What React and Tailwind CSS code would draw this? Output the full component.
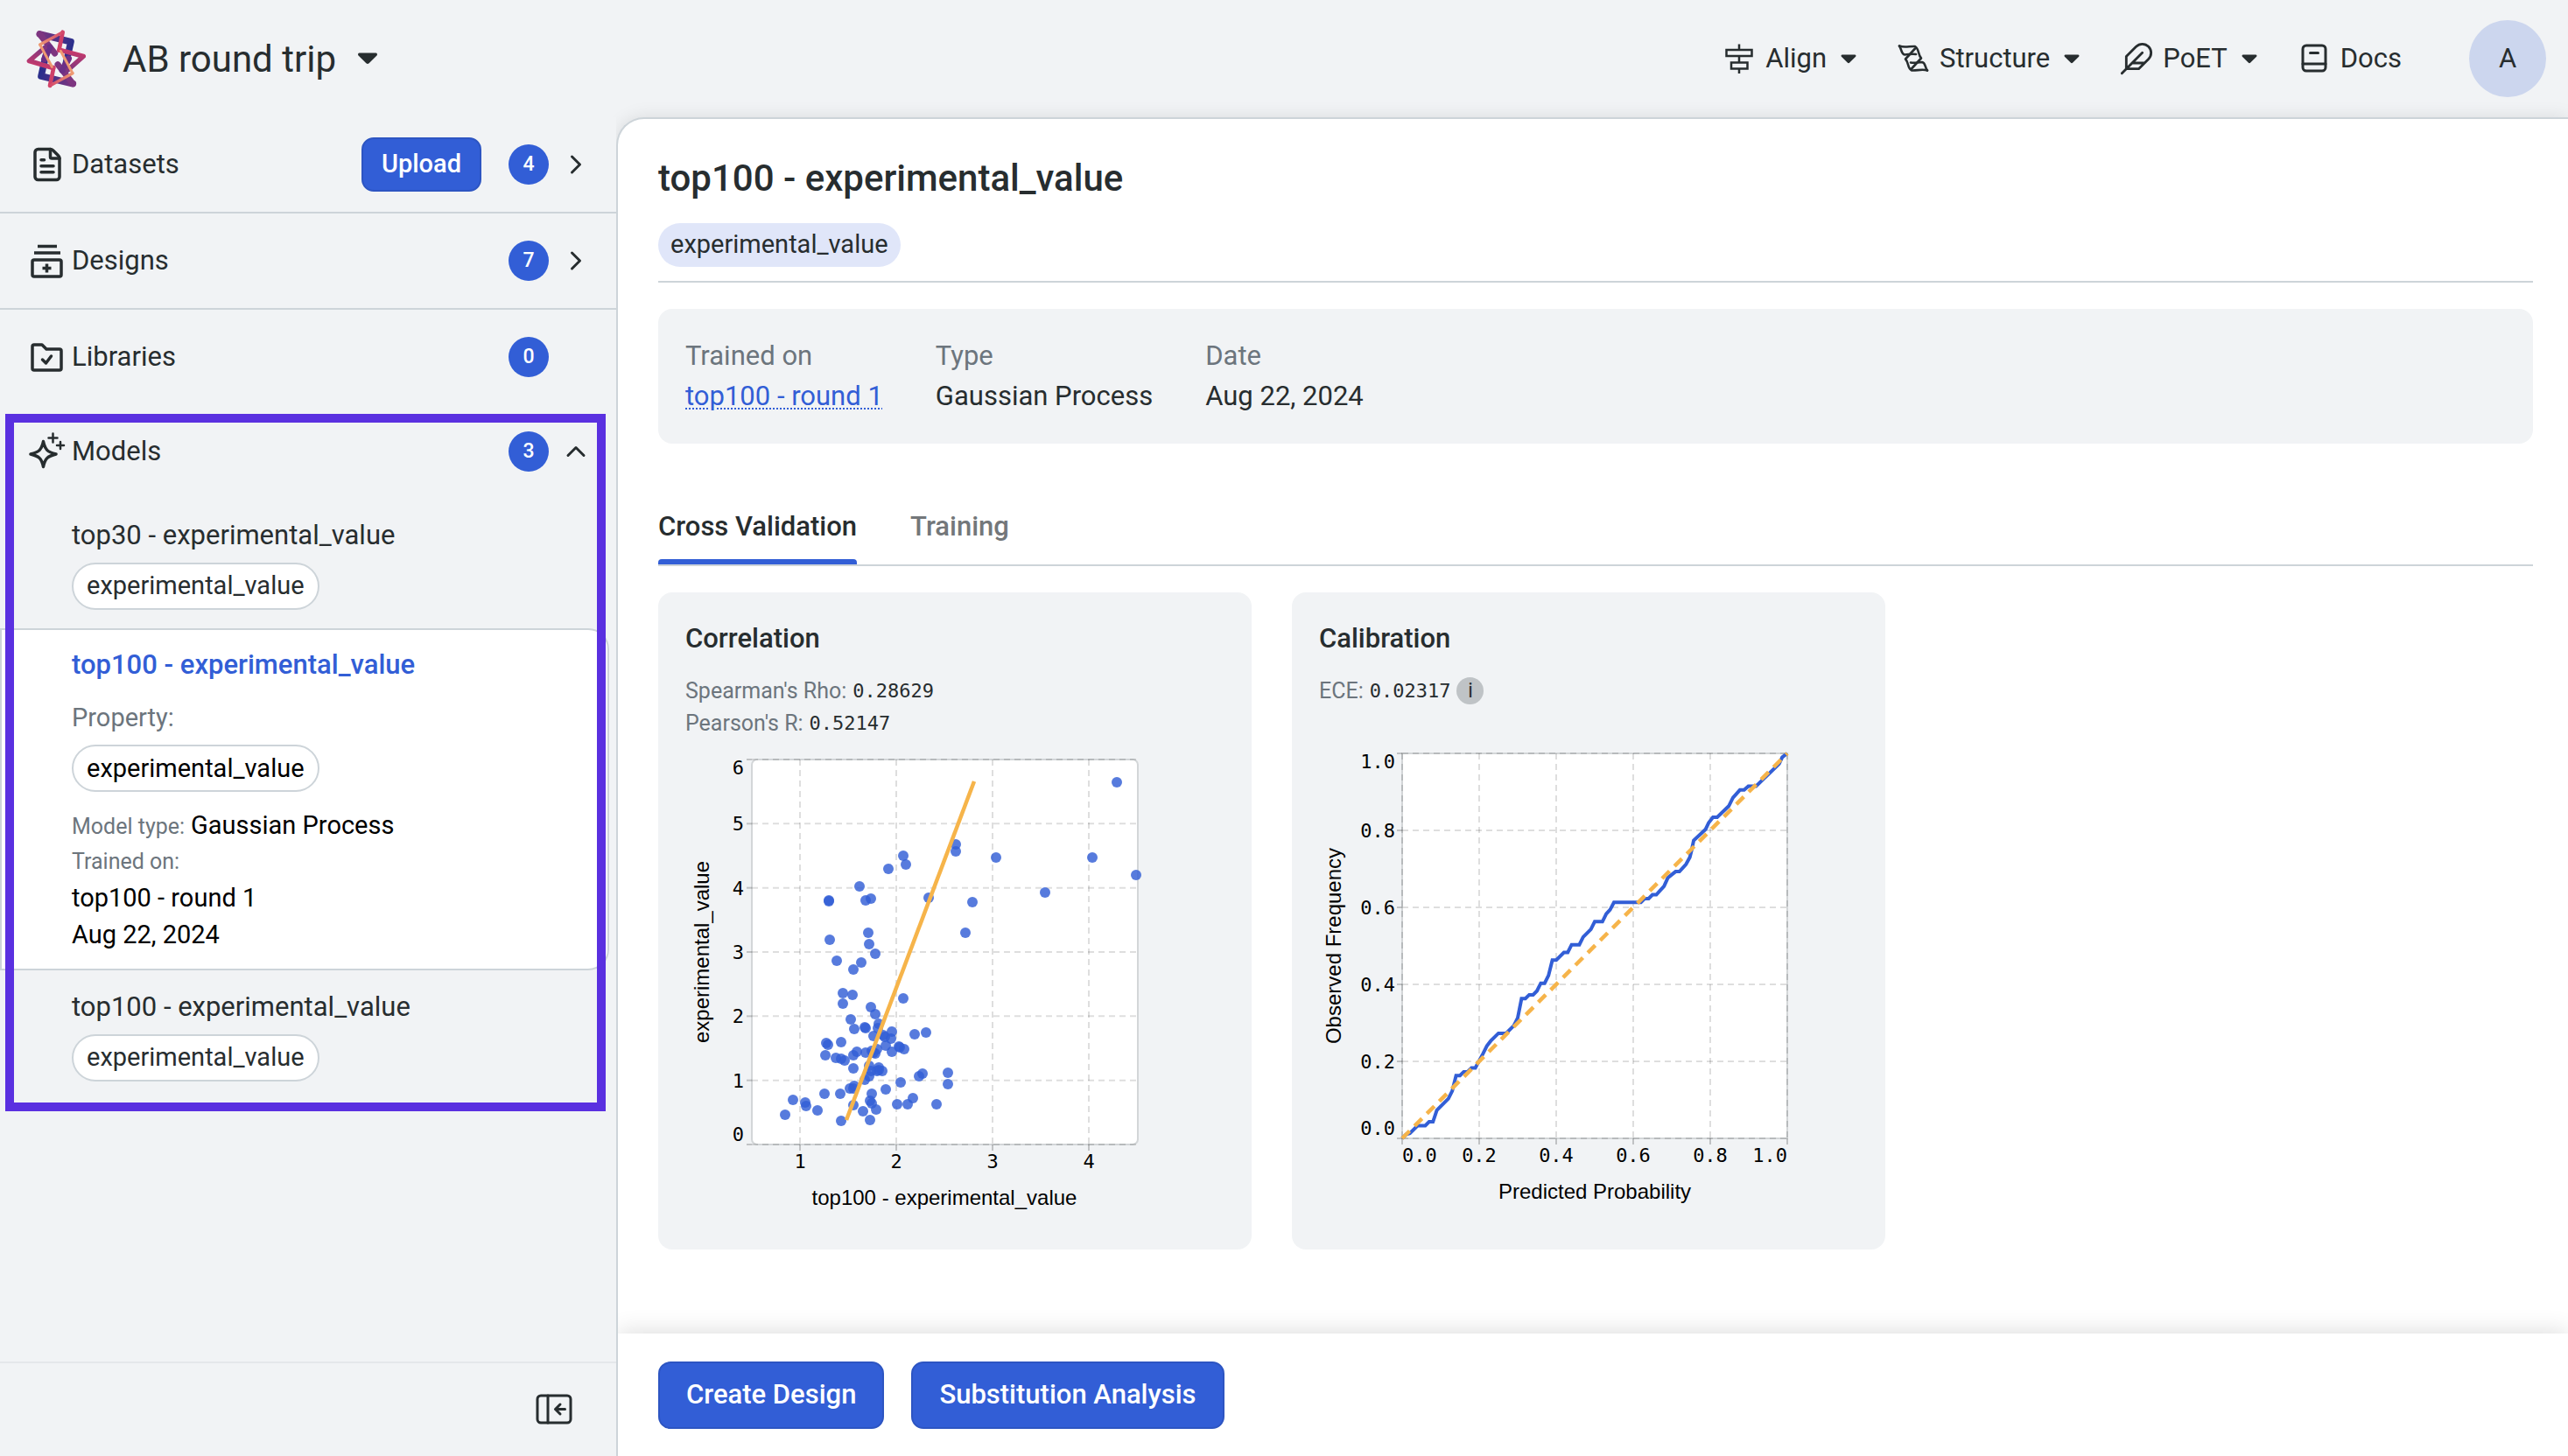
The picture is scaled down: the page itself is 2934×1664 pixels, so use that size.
import { ChevronRight, ChevronUp, FileText } from "lucide-react";

const SCATTER = [
  [417, 26], [173, 110], [176, 120], [156, 125], [123, 145], [88, 161], [88, 162], [130, 161], [136, 159],
  [233, 97], [233, 105], [279, 112], [389, 112], [439, 132], [335, 152], [202, 158], [252, 163], [244, 198],
  [133, 198], [89, 206], [134, 211], [141, 222], [97, 230], [125, 232], [116, 240], [104, 267], [115, 269],
  [173, 273], [104, 279], [136, 283], [141, 291], [113, 297], [145, 302], [117, 308], [129, 306], [130, 307],
  [144, 307], [160, 311], [186, 314], [199, 312], [139, 316], [150, 315], [152, 317], [159, 319], [85, 324],
  [87, 326], [102, 323], [153, 327], [168, 328], [169, 329], [174, 331], [120, 334], [130, 335], [137, 333],
  [139, 335], [141, 336], [143, 331], [160, 334], [84, 338], [116, 338], [96, 341], [102, 342], [106, 344],
  [116, 353], [134, 350], [145, 352], [145, 355], [149, 356], [143, 356], [136, 356], [134, 362], [224, 358],
  [195, 359], [191, 362], [224, 371], [170, 369], [129, 366], [117, 373], [112, 376], [116, 376], [153, 377],
  [83, 382], [101, 382], [137, 382], [47, 389], [61, 392], [62, 396], [135, 390], [137, 393], [184, 387],
  [166, 394], [178, 394], [211, 394], [116, 395], [75, 401], [127, 402], [142, 400], [38, 406], [102, 413],
  [135, 412],
];

const CALIBRATION = [
  [0, 0], [0.01, 0.01], [0.02, 0.013], [0.04, 0.033], [0.06, 0.033], [0.07, 0.043], [0.08, 0.043], [0.09, 0.073],
  [0.12, 0.103], [0.13, 0.123], [0.14, 0.163], [0.15, 0.163], [0.16, 0.173], [0.17, 0.173], [0.18, 0.183],
  [0.19, 0.183], [0.21, 0.22], [0.22, 0.24], [0.23, 0.253], [0.25, 0.273], [0.27, 0.273], [0.29, 0.293],
  [0.3, 0.313], [0.31, 0.363], [0.32, 0.363], [0.33, 0.373], [0.34, 0.373], [0.35, 0.383], [0.36, 0.403],
  [0.37, 0.403], [0.38, 0.423], [0.39, 0.463], [0.4, 0.463], [0.42, 0.483], [0.43, 0.483], [0.44, 0.503],
  [0.46, 0.503], [0.47, 0.523], [0.49, 0.543], [0.5, 0.563], [0.52, 0.563], [0.53, 0.583], [0.54, 0.594],
  [0.55, 0.613], [0.62, 0.613], [0.63, 0.623], [0.64, 0.623], [0.65, 0.633], [0.66, 0.633], [0.68, 0.655],
  [0.69, 0.677], [0.71, 0.693], [0.72, 0.693], [0.737, 0.712], [0.747, 0.73], [0.752, 0.75], [0.757, 0.774],
  [0.788, 0.803], [0.796, 0.82], [0.807, 0.834], [0.818, 0.834], [0.848, 0.863], [0.859, 0.885], [0.877, 0.905],
  [0.888, 0.905], [0.899, 0.915], [0.919, 0.915], [0.979, 0.973], [0.987, 0.99], [1, 1],
];

function Logo() {
  return (
    <svg viewBox="60 65 204 210" className="h-[70px] w-[68px]" fill="none" strokeLinejoin="round" strokeLinecap="round" role="img" aria-label="Home">
      <defs>
        <linearGradient id="navyA" gradientUnits="userSpaceOnUse" x1="105" y1="85" x2="215" y2="125">
          <stop offset="0" stopColor="#7d3580" />
          <stop offset="1" stopColor="#2b2f8c" />
        </linearGradient>
        <linearGradient id="navyB" gradientUnits="userSpaceOnUse" x1="221" y1="257" x2="111" y2="217">
          <stop offset="0" stopColor="#7d3580" />
          <stop offset="1" stopColor="#2b2f8c" />
        </linearGradient>
        <linearGradient id="roseA" gradientUnits="userSpaceOnUse" x1="118" y1="132" x2="110" y2="200">
          <stop offset="0" stopColor="#7d3580" />
          <stop offset="1" stopColor="#c93a6b" />
        </linearGradient>
        <linearGradient id="roseB" gradientUnits="userSpaceOnUse" x1="208" y1="210" x2="216" y2="142">
          <stop offset="0" stopColor="#7d3580" />
          <stop offset="1" stopColor="#c93a6b" />
        </linearGradient>
        <linearGradient id="peachA" gradientUnits="userSpaceOnUse" x1="185" y1="78" x2="107" y2="122">
          <stop offset="0" stopColor="#d4476a" />
          <stop offset="1" stopColor="#ee9a72" />
        </linearGradient>
        <linearGradient id="peachB" gradientUnits="userSpaceOnUse" x1="141" y1="264" x2="219" y2="220">
          <stop offset="0" stopColor="#d4476a" />
          <stop offset="1" stopColor="#ee9a72" />
        </linearGradient>
      </defs>
      <path d="M106 86 213 112 190 212" stroke="url(#navyA)" strokeWidth="23" />
      <path d="M220 256 111 230 134 130" stroke="url(#navyB)" strokeWidth="23" />
      <path d="M106 86 158 152" stroke="#7d3580" strokeWidth="21" />
      <path d="M220 256 168 190" stroke="#7d3580" strokeWidth="21" />
      <path d="M184 210 205 170" stroke="#6b2f86" strokeWidth="22" />
      <path d="M140 132 122 172" stroke="#6b2f86" strokeWidth="22" />
      <path d="M124 132 70 178 152 202" stroke="url(#roseA)" strokeWidth="16" />
      <path d="M202 210 256 162 174 140" stroke="url(#roseB)" strokeWidth="16" />
      <path d="M185 79 172 142" stroke="#cf4069" strokeWidth="14" />
      <path d="M141 263 154 200" stroke="#cf4069" strokeWidth="14" />
      <path d="M185 79 107 122" stroke="url(#peachA)" strokeWidth="10" />
      <path d="M107 122 148 198" stroke="#ee9a72" strokeWidth="9" />
      <path d="M141 263 219 220" stroke="url(#peachB)" strokeWidth="10" />
      <path d="M219 220 178 144" stroke="#ee9a72" strokeWidth="9" />
    </svg>
  );
}

function Caret({ className }) {
  return (
    <svg viewBox="0 0 20 12" className={className} fill="currentColor" aria-hidden="true">
      <path d="M2 0.5h16a1.4 1.4 0 0 1 1 2.4l-7.6 7.6a2 2 0 0 1-2.8 0L1 2.9A1.4 1.4 0 0 1 2 0.5z" />
    </svg>
  );
}

function Icon({ children, className = "size-10", box = 40, stroke = 3 }) {
  return (
    <svg viewBox={`0 0 ${box} ${box}`} className={`${className} shrink-0`} fill="none" stroke="currentColor" strokeWidth={stroke} strokeLinecap="round" strokeLinejoin="round" aria-hidden="true">
      {children}
    </svg>
  );
}

const AlignIcon = () => (
  <Icon>
    <g strokeLinecap="butt" strokeLinejoin="miter" strokeWidth="2.5">
      <path d="M5.500 10h29v7h-29zM11 24.500h18.500v7H11zM20 3.500V10M20 17v7.500M20 31.500V37" />
    </g>
  </Icon>
);

const StructureIcon = () => (
  <Icon stroke={2.6}>
    <g transform="translate(3 3.500)">
      <path d="M1 2C7 4.500 13 2 19 2.500C24 5.500 22 12 26 16L15 28" />
      <path d="M33 30C27 28 21 30.500 15 30C10 27 12 21 8 17L19 5" />
      <path d="M1 2C4 6 3 11.500 7 12C12 12 15 10.500 20 11.500" />
      <path d="M33 30C30 26 31 21 27 20.500C22 20.500 19 22 14 21" />
    </g>
  </Icon>
);

const PoetIcon = () => (
  <Icon box={24} stroke={1.7}>
    <path d="M20.240 12.240a6 6 0 0 0-8.490-8.490L5 10.500V19h8.500zM16 8 2 22M17.500 15H9" />
  </Icon>
);

const DocsIcon = () => (
  <Icon>
    <rect x="7" y="5" width="26" height="29" rx="4" />
    <path d="M7 26h26M15.500 13.500h9" />
  </Icon>
);

const DesignsIcon = () => (
  <Icon className="size-11" box={44} stroke={3.5}>
    <rect x="5" y="21" width="33" height="19" rx="2" />
    <g strokeLinecap="butt">
      <path d="M11 5.500h22M7 13h30M21.500 25.500v10M16.500 30.500h10" />
    </g>
  </Icon>
);

const LibrariesIcon = () => (
  <Icon className="size-11" box={44} stroke={3.5}>
    <path d="M5 10a2 2 0 0 1 2-2h9l5 5h15a2 2 0 0 1 2 2v20a2 2 0 0 1-2 2H7a2 2 0 0 1-2-2z" />
    <path d="M16.500 25l4 4 6-8" />
  </Icon>
);

const ModelsIcon = () => (
  <Icon className="size-11" box={44} stroke={3.5}>
    <path d="M17.500 10.500C19.500 20 22 22.500 32 25C22 27.500 19.500 30 17.500 39.500C15.500 30 13 27.500 3 25C13 22.500 15.500 20 17.500 10.500z" />
    <path strokeWidth="2.500" d="M28.500 1.500v10M23.500 6.500h10M37 11v8M33 15h8" />
  </Icon>
);

const CollapseIcon = () => (
  <Icon className="size-12" box={48}>
    <rect x="5" y="8" width="38" height="31" rx="4" />
    <path d="M17 8v31M25.500 23.500h11M31 18 25.500 23.500 31 29" />
  </Icon>
);

function NavItem({ icon, label }) {
  return (
    <button type="button" className="flex items-center gap-[10px] text-[31px]">
      {icon}
      <span>{label}</span>
      <Caret className="ml-[6px] h-[11px] w-[18px]" />
    </button>
  );
}

function Header() {
  return (
    <header className="flex h-[134px] items-center justify-between pr-[25px] pl-[30px]">
      <div className="flex items-center gap-[42px]">
        <Logo />
        <button type="button" className="flex items-center gap-6 text-[42px]">
          AB round trip
          <Caret className="h-[14px] w-6" />
        </button>
      </div>
      <nav className="flex items-center gap-[45px]">
        <NavItem icon={<AlignIcon />} label="Align" />
        <NavItem icon={<StructureIcon />} label="Structure" />
        <NavItem icon={<PoetIcon />} label="PoET" />
        <a href="#docs" className="flex items-center gap-[10px] text-[31px]">
          <DocsIcon />
          Docs
        </a>
        <button type="button" aria-label="Account" className="ml-8 size-[88px] rounded-full bg-[#ccd6ee] text-[31px]">
          A
        </button>
      </nav>
    </header>
  );
}

function SectionRow({ icon, label, count, action, chevron, border }) {
  return (
    <div className={border ? "flex h-[110px] items-center border-b-2 border-[#cdd4d9] pr-[26px] pl-8" : "flex h-[108px] items-center pr-[26px] pl-8"}>
      <span className="flex w-11 justify-center">{icon}</span>
      <span className="ml-[6px] flex-1 text-[31px]">{label}</span>
      {action}
      <span className="ml-[31px] flex size-[46px] items-center justify-center rounded-full bg-[#325ed6] text-[23px] font-medium text-white">
        {count}
      </span>
      <span className="ml-[11px] flex size-10 items-center justify-center">{chevron}</span>
    </div>
  );
}

function Chevron({ up, label }) {
  return (
    <button type="button" aria-label={label} className="block">
      {up ? <ChevronUp size={36} strokeWidth={2} /> : <ChevronRight size={36} strokeWidth={2} />}
    </button>
  );
}

function Pill() {
  return (
    <span className="inline-flex h-[54px] items-center rounded-full border-2 border-[#cdd4d9] bg-white px-[15px] text-[29px]">
      experimental_value
    </span>
  );
}

function ModelItem({ name }) {
  return (
    <li className="flex flex-col items-start pt-[19px] pb-[21px] pl-[82px]">
      <a href="#model" className="mb-2 text-[31px] leading-[46px]">{name}</a>
      <Pill />
    </li>
  );
}

function Sidebar() {
  return (
    <aside className="relative z-10 flex w-[704px] shrink-0 flex-col bg-[#f1f3f5]">
      <SectionRow
        border
        icon={<FileText size={42} strokeWidth={2} />}
        label="Datasets"
        count="4"
        action={
          <button type="button" className="h-[62px] rounded-[14px] border-2 border-[#2d55c2] bg-[#325ed6] px-[21px] text-[29px] font-medium text-white">
            Upload
          </button>
        }
        chevron={<Chevron label="Open datasets" />}
      />
      <SectionRow border icon={<DesignsIcon />} label="Designs" count="7" chevron={<Chevron label="Open designs" />} />
      <SectionRow icon={<LibrariesIcon />} label="Libraries" count="0" />
      <section className="relative">
        <SectionRow icon={<ModelsIcon />} label="Models" count="3" chevron={<Chevron up label="Close models" />} />
        <ul>
          <ModelItem name="top30 - experimental_value" />
          <li className="mr-2 flex flex-col items-start rounded-r-[24px] border-2 border-[#cdd4d9] bg-white pt-[17px] pb-[18px] pl-20 text-[29px] leading-[42px] text-black">
            <a href="#model" className="text-[31px] leading-[46px] font-medium text-[#325ed6]">top100 - experimental_value</a>
            <span className="mt-[14px] mb-2 leading-[46px] text-[#6c757d]">Property:</span>
            <Pill />
            <span className="mt-[17px] flex h-[42px] items-baseline gap-[7px]">
              <span className="text-[25px] text-[#6c757d]">Model type:</span>
              <span>Gaussian Process</span>
            </span>
            <span className="text-[25px] leading-[41px] text-[#6c757d]">Trained on:</span>
            <span>top100 - round 1</span>
            <span>Aug 22, 2024</span>
          </li>
          <ModelItem name="top100 - experimental_value" />
        </ul>
        <div className="pointer-events-none absolute top-[11px] right-3 -bottom-[13px] left-[6px] border-[10px] border-[#5a30e0]" />
      </section>
      <div className="mt-auto flex h-[108px] items-center justify-end border-t-2 border-[#e4e7ea] pr-[47px]">
        <button type="button" aria-label="Collapse sidebar">
          <CollapseIcon />
        </button>
      </div>
    </aside>
  );
}

function Field({ label, children }) {
  return (
    <div>
      <dt className="text-[#6c757d]">{label}</dt>
      <dd>{children}</dd>
    </div>
  );
}

const GRID = { stroke: "#000", strokeOpacity: 0.13, strokeWidth: 2, strokeDasharray: "7 5" };
const TICK = { stroke: "#000", strokeOpacity: 0.2, strokeWidth: 2 };
const MONO = "font-['DejaVu_Sans_Mono',monospace] text-[22px]";
const AXIS = "font-['Liberation_Sans',Arial,sans-serif] text-[24px]";

function CorrelationChart() {
  const x = (v) => (v - 0.5) * 110;
  const y = (v) => 440 - v * (440 / 6);
  return (
    <svg viewBox="-75 -23 614 551" className="h-[551px] w-full" role="img" aria-label="Correlation scatter plot">
      <rect x="0" y="0" width="441" height="440" rx="6" fill="#fff" stroke="#d3d6d8" strokeWidth="2" />
      {[1, 2, 3, 4].map((v) => (
        <g key={v}>
          <line x1={x(v)} x2={x(v)} y1="0" y2="440" {...GRID} />
          <line x1={x(v)} x2={x(v)} y1="440" y2="447" {...TICK} />
          <text x={x(v)} y="467" textAnchor="middle" className={MONO}>{v}</text>
        </g>
      ))}
      {[0, 1, 2, 3, 4, 5, 6].map((v) => (
        <g key={v}>
          <line x1="0" x2="440" y1={y(v)} y2={y(v)} {...GRID} />
          <line x1="-6" x2="0" y1={y(v)} y2={y(v)} {...TICK} />
          <text x="-9" y={y(v) + (v === 0 ? -4 : v === 6 ? 17 : 8)} textAnchor="end" className={MONO}>{v}</text>
        </g>
      ))}
      {SCATTER.map(([cx, cy], i) => (
        <circle key={i} cx={cx} cy={cy} r="6" fill="#325ed6" fillOpacity="0.82" />
      ))}
      <line x1="254" y1="25" x2="108" y2="412" stroke="#f6b44a" strokeWidth="4.5" />
      <text x="220" y="509" textAnchor="middle" className={AXIS}>top100 - experimental_value</text>
      <text transform="translate(-49 220) rotate(-90)" textAnchor="middle" className={AXIS}>experimental_value</text>
    </svg>
  );
}

function CalibrationChart() {
  const x = (v) => v * 440;
  const y = (v) => 440 - v * 440;
  const ticks = [0, 0.2, 0.4, 0.6, 0.8, 1];
  return (
    <svg viewBox="-94 -53 614 588" className="h-[588px] w-full" role="img" aria-label="Calibration curve">
      <rect x="0" y="0" width="440" height="440" fill="#fff" stroke="#d3d6d8" strokeWidth="2" />
      {ticks.map((v) => (
        <g key={v}>
          <line x1={x(v)} x2={x(v)} y1="0" y2="440" {...GRID} />
          <line x1={x(v)} x2={x(v)} y1="440" y2="447" {...TICK} />
          <line x1="0" x2="440" y1={y(v)} y2={y(v)} {...GRID} />
          <line x1="-6" x2="0" y1={y(v)} y2={y(v)} {...TICK} />
          <text x={x(v)} y="467" textAnchor={v === 0 ? "start" : v === 1 ? "end" : "middle"} className={MONO}>{v.toFixed(1)}</text>
          <text x="-8" y={y(v) + (v === 0 ? -4 : v === 1 ? 17 : 8)} textAnchor="end" className={MONO}>{v.toFixed(1)}</text>
        </g>
      ))}
      <polyline points={CALIBRATION.map(([a, b]) => `${x(a)},${y(b)}`).join(" ")} fill="none" stroke="#325ed6" strokeWidth="4" />
      <line x1="0" y1="440" x2="440" y2="0" stroke="#f6b44a" strokeWidth="4.5" strokeDasharray="12 8" />
      <text x="220" y="509" textAnchor="middle" className={AXIS}>Predicted Probability</text>
      <text transform="translate(-70 220) rotate(-90)" textAnchor="middle" className={AXIS}>Observed Frequency</text>
    </svg>
  );
}

function Metric({ label, value, children }) {
  return (
    <p className="flex h-[37px] items-center gap-[7px] text-[25px]">
      <span className="text-[#6c757d]">{label}</span>
      <span className={MONO}>{value}</span>
      {children}
    </p>
  );
}

function Card({ title, children }) {
  return (
    <section className="w-[678px] rounded-[16px] bg-[#f1f3f5] px-[31px] py-8">
      <h2 className="mb-5 text-[31px] leading-[42px] font-medium">{title}</h2>
      {children}
    </section>
  );
}

function Main() {
  return (
    <main className="flex min-w-0 flex-1 flex-col overflow-clip rounded-tl-[32px] border-t-2 border-l-2 border-[#cdd4d9] bg-white shadow-[0_0_20px_rgba(0,0,0,0.1)]">
      <div className="flex-1 pt-[38px] pr-10 pb-8 pl-[46px]">
        <h1 className="text-[42px] leading-[60px] font-medium">top100 - experimental_value</h1>
        <div className="mt-[21px] border-b-2 border-[#cdd4d9] pb-4">
          <span className="flex h-[50px] w-fit items-center rounded-full bg-[#e0e6f9] px-[14px] text-[29px]">experimental_value</span>
        </div>
        <dl className="mt-[30px] flex gap-[60px] rounded-[16px] bg-[#f1f3f5] px-[31px] py-[31px] text-[31px] leading-[46px]">
          <Field label="Trained on">
            <a href="#dataset" className="text-[#325ed6] underline decoration-dotted decoration-2 underline-offset-3">top100 - round 1</a>
          </Field>
          <Field label="Type">Gaussian Process</Field>
          <Field label="Date">Aug 22, 2024</Field>
        </dl>
        <div role="tablist" className="mt-[72px] flex gap-[61px] border-b-2 border-[#cdd4d9] text-[31px] leading-[46px] font-medium">
          <button type="button" role="tab" aria-selected="true" className="flex flex-col">
            Cross Validation
            <span className="mt-[14px] h-[6px] w-full rounded-t-sm bg-[#325ed6]" />
          </button>
          <button type="button" role="tab" aria-selected="false" className="pb-5 text-[#73777a]">
            Training
          </button>
        </div>
        <div className="mt-[30px] flex flex-wrap gap-[46px]">
          <Card title="Correlation">
            <Metric label="Spearman's Rho:" value="0.28629" />
            <Metric label="Pearson's R:" value="0.52147" />
            <CorrelationChart />
          </Card>
          <Card title="Calibration">
            <Metric label="ECE:" value="0.02317">
              <button type="button" aria-label="About ECE" className="size-[31px] rounded-full bg-[#bfc3c6] text-[23px] leading-[31px]">
                i
              </button>
            </Metric>
            <CalibrationChart />
          </Card>
        </div>
      </div>
      <footer className="flex gap-[31px] bg-white px-[46px] pt-8 pb-[31px] shadow-[0_-4px_24px_rgba(0,0,0,0.12)]">
        <button type="button" className="h-[77px] rounded-[14px] border-2 border-[#2d55c2] bg-[#325ed6] px-[30px] text-[31px] font-medium text-white">
          Create Design
        </button>
        <button type="button" className="h-[77px] rounded-[14px] border-2 border-[#2d55c2] bg-[#325ed6] px-[30px] text-[31px] font-medium text-white">
          Substitution Analysis
        </button>
      </footer>
    </main>
  );
}

export default function App() {
  return (
    <div className="flex min-h-screen flex-col bg-[#f1f3f5] font-[Roboto,sans-serif] text-[#272d2f]">
      <Header />
      <div className="flex flex-1">
        <Sidebar />
        <Main />
      </div>
    </div>
  );
}
